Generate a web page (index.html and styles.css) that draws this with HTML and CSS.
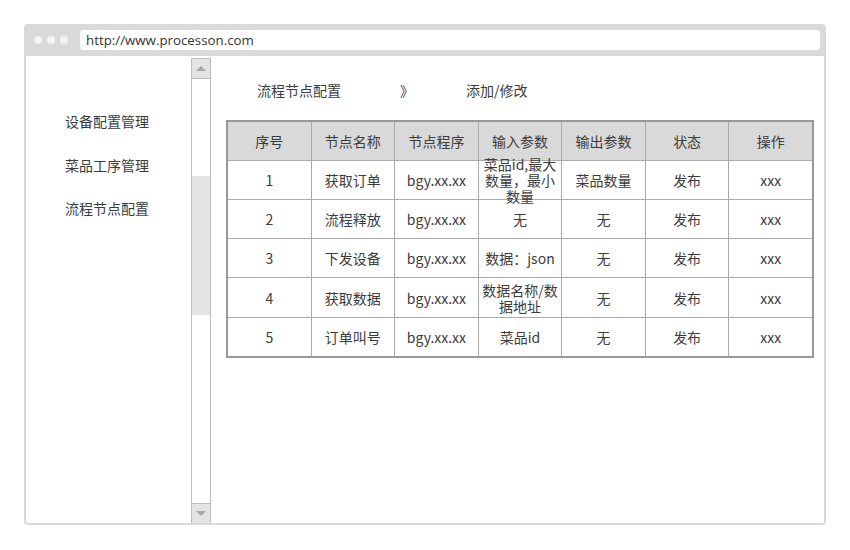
FILE: index.html
```html
<!DOCTYPE html>
<html lang="zh">
<head>
<meta charset="utf-8">
<title>流程节点配置</title>
<link rel="stylesheet" href="styles.css">
</head>
<body>
<div class="window">
  <div class="titlebar">
    <div class="dots"><span class="dot"></span><span class="dot"></span><span class="dot"></span></div>
    <div class="url">http://www.processon.com</div>
  </div>
  <div class="content">
    <nav class="sidebar">
      <div class="nav-item">设备配置管理</div>
      <div class="nav-item">菜品工序管理</div>
      <div class="nav-item">流程节点配置</div>
    </nav>
    <div class="scrollbar">
      <div class="sb-btn"><span class="arrow-up"></span></div>
      <div class="sb-track">
        <div class="sb-gap-top"></div>
        <div class="sb-thumb"></div>
      </div>
      <div class="sb-btn sb-btn-bottom"><span class="arrow-down"></span></div>
    </div>
    <main class="main">
      <div class="breadcrumb">
        <span>流程节点配置</span>
        <span class="sep">》</span>
        <span>添加/修改</span>
      </div>
      <div class="table">
        <div class="cell head">序号</div>
        <div class="cell head">节点名称</div>
        <div class="cell head">节点程序</div>
        <div class="cell head">输入参数</div>
        <div class="cell head">输出参数</div>
        <div class="cell head">状态</div>
        <div class="cell head">操作</div>

        <div class="cell">1</div>
        <div class="cell">获取订单</div>
        <div class="cell">bgy.xx.xx</div>
        <div class="cell tight">菜品id,最大数量，最小数量</div>
        <div class="cell">菜品数量</div>
        <div class="cell">发布</div>
        <div class="cell">xxx</div>

        <div class="cell">2</div>
        <div class="cell">流程释放</div>
        <div class="cell">bgy.xx.xx</div>
        <div class="cell">无</div>
        <div class="cell">无</div>
        <div class="cell">发布</div>
        <div class="cell">xxx</div>

        <div class="cell">3</div>
        <div class="cell">下发设备</div>
        <div class="cell">bgy.xx.xx</div>
        <div class="cell">数据：json</div>
        <div class="cell">无</div>
        <div class="cell">发布</div>
        <div class="cell">xxx</div>

        <div class="cell">4</div>
        <div class="cell">获取数据</div>
        <div class="cell">bgy.xx.xx</div>
        <div class="cell tight">数据名称/数据地址</div>
        <div class="cell">无</div>
        <div class="cell">发布</div>
        <div class="cell">xxx</div>

        <div class="cell">5</div>
        <div class="cell">订单叫号</div>
        <div class="cell">bgy.xx.xx</div>
        <div class="cell">菜品id</div>
        <div class="cell">无</div>
        <div class="cell">发布</div>
        <div class="cell">xxx</div>
      </div>
    </main>
  </div>
</div>
</body>
</html>
```

FILE: styles.css
```css
html, body {
  margin: 0;
  padding: 0;
  background: #ffffff;
}

body {
  font-family: "Noto Sans CJK SC", "Open Sans", sans-serif;
  font-size: 14px;
  color: #3c3c3c;
}

.window {
  margin: 24px 0 0 24px;
  width: 798px;
  height: 497px;
  border: 2px solid #d9d9d9;
  border-radius: 4px;
  display: flex;
  flex-direction: column;
  background: #ffffff;
}

.titlebar {
  height: 30px;
  background: #d9d9d9;
  display: flex;
  align-items: flex-start;
  flex-shrink: 0;
}

.dots {
  display: flex;
  gap: 5px;
  padding: 10px 0 0 8px;
  width: 46px;
}

.dot {
  width: 8px;
  height: 8px;
  border-radius: 50%;
  background: #f4f4f4;
}

.url {
  margin-top: 4px;
  flex: 1;
  margin-right: 4px;
  height: 20px;
  background: #ffffff;
  border-radius: 3px;
  padding-left: 6px;
  line-height: 20px;
  font-family: "Open Sans", "Noto Sans", sans-serif;
  font-size: 13.3px;
  color: #333333;
}

.content {
  flex: 1;
  display: flex;
  min-height: 0;
}

.sidebar {
  width: 165px;
  padding: 55px 0 0 39px;
  box-sizing: border-box;
  display: flex;
  flex-direction: column;
  gap: 23.5px;
}

.nav-item {
  line-height: 20px;
  height: 20px;
}

.scrollbar {
  width: 20px;
  box-sizing: border-box;
  border: 1px solid #bbbbbb;
  border-bottom: none;
  margin-top: 2px;
  display: flex;
  flex-direction: column;
}

.sb-btn {
  height: 19px;
  background: #e3e3e3;
  border-bottom: 1px solid #bbbbbb;
  display: flex;
  align-items: center;
  justify-content: center;
  flex-shrink: 0;
}

.sb-btn-bottom {
  border-bottom: none;
  border-top: 1px solid #bbbbbb;
}

.arrow-up {
  width: 0;
  height: 0;
  border-left: 5px solid transparent;
  border-right: 5px solid transparent;
  border-bottom: 5px solid #a6a6a6;
}

.arrow-down {
  width: 0;
  height: 0;
  border-left: 5px solid transparent;
  border-right: 5px solid transparent;
  border-top: 5px solid #a6a6a6;
}

.sb-track {
  flex: 1;
  background: #ffffff;
}

.sb-gap-top {
  height: 97px;
}

.sb-thumb {
  height: 139px;
  background: #e3e3e3;
}

.main {
  flex: 1;
  padding: 0 0 0 15px;
}

.breadcrumb {
  padding: 24px 0 0 31px;
  height: 20px;
  line-height: 20px;
  display: flex;
  margin-bottom: 20px;
}

.breadcrumb .sep {
  margin: 0 52px 0 59px;
}

.table {
  width: 588px;
  box-sizing: border-box;
  border: 2px solid #999999;
  background: #aaaaaa;
  display: grid;
  grid-template-columns: repeat(7, 1fr);
  grid-template-rows: 37.5px repeat(5, 38.3px);
  gap: 1px;
}

.cell {
  background: #ffffff;
  display: flex;
  align-items: center;
  justify-content: center;
  text-align: center;
  padding: 0 2px;
  line-height: 16px;
  overflow: visible;
  position: relative;
}

.cell.tight {
  z-index: 1;
}

.cell.head {
  background: #d9d9d9;
}
```
